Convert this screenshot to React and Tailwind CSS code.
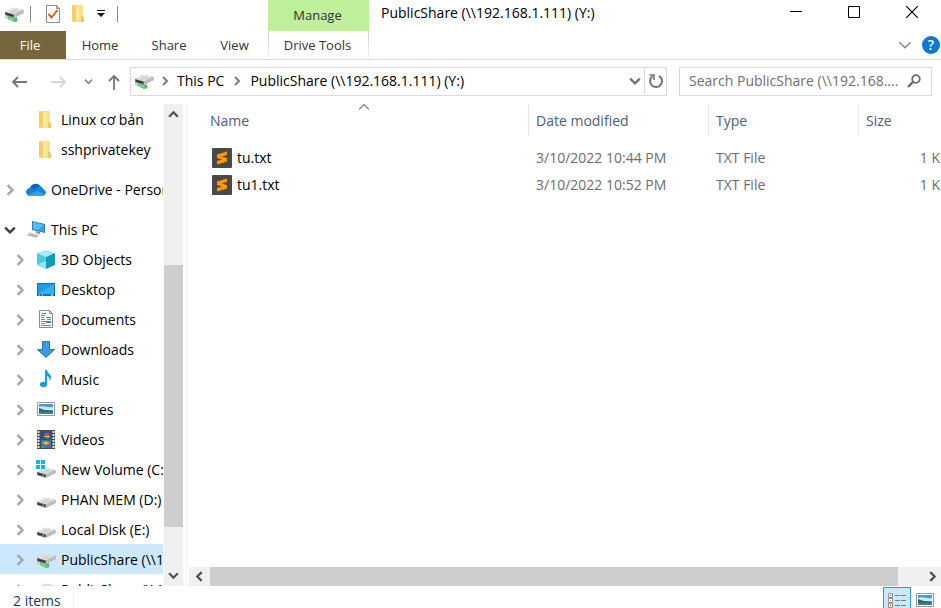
import React from "react";

function Chevron({ dir = "right", className = "", size = 10, width = 2 }) {
  const d = {
    right: "M3 1l4 4-4 4",
    left: "M7 1L3 5l4 4",
    down: "M1 3l4 4 4-4",
    up: "M1 7l4-4 4 4",
  }[dir];
  return (
    <svg width={size} height={size} viewBox="0 0 10 10" fill="none" stroke="currentColor" strokeWidth={width} className={`shrink-0 ${className}`}>
      <path d={d} />
    </svg>
  );
}

function FolderIcon() {
  return (
    <svg width="20" height="20" viewBox="0 0 20 20" className="shrink-0">
      <path d="M3 1h11v12l1 1v4H3z" fill="#ffe08a" />
      <path d="M3 1l4 2v15l-4-2z" fill="#f6cd62" />
      <path d="M7 3h3v12l-3 3z" fill="#ffebae" />
      <path d="M12 12h2l1 2v4h-3z" fill="#f0c85c" />
    </svg>
  );
}

function DriveIcon({ network = false, windows = false }) {
  return (
    <svg width="20" height="20" viewBox="0 0 20 20" className="shrink-0">
      {network && (
        <>
          <path d="M1 12l3-1 10 4v2l-2 1-3-1-8-3z" fill="#c3cfc6" />
          <path d="M4 12l6 2 3-1v4l-3 1-6-3z" fill="#4cc566" />
          <path d="M5 14l5 2" stroke="#9cf0a8" />
        </>
      )}
      <g transform={network ? "translate(0 -4)" : undefined}>
        <path d="M1 12l8-4q1-.5 2 0l8 2q.5 0 .5 1v2l-9 4.500q-1 .5-2 0L1 15z" fill="#9b9b9b" />
        <path d="M1 12l8-4q1-.5 2 0l8 2-9 4.500z" fill="#e6e6e6" />
        <path d="M4 12.200l6-3 6 1.500-6 3z" fill="#d4d4d4" />
        <path d="M1 12l9 2.500v3L1 15z" fill="#6e6e6e" />
        <path d="M2 13l7 2v1.500l-7-2z" fill="#303030" />
        <path d="M10 14.500l9.500-4.500v3l-9.500 4.500z" fill="#bdbdbd" />
        {!network && <path d="M6 15l2 .6" stroke="#5fcf72" />}
      </g>
      {windows && (
        <path d="M0 0h4v4H0zM5 0h4v4H5zM0 5h4v4H0zM5 5h4v4H5z" fill="#12b5f0" />
      )}
    </svg>
  );
}

function OneDriveIcon() {
  return (
    <svg width="20" height="20" viewBox="0 0 20 20" className="shrink-0">
      <path d="M4 8a6 6 0 0 1 11-1l-3 6H1a4 4 0 0 1 3-5z" fill="#0d63b8" />
      <path d="M10 8c2-3 7-2 7 1 4 1 4 7-1 7H4z" fill="#1488d8" />
      <path d="M0 12c0-4 5-5 8-3l9 6-1 1H4c-2 0-4-2-4-4z" fill="#1a82d6" />
      <path d="M2 15l9-4 7 3c-1 2-2 2-3 2H4z" fill="#2fa4ea" />
    </svg>
  );
}

function ComputerIcon() {
  return (
    <svg width="20" height="20" viewBox="0 0 20 20" className="shrink-0">
      <path d="M6 1l13 3v9L6 10z" fill="#2b7db8" />
      <path d="M7 2l11 3v7L7 9z" fill="#2ea6ee" />
      <path d="M7 2l11 3-6 5-5-1z" fill="#55bdf5" />
      <path d="M10 11l4 1v2l-4-1z" fill="#888" />
      <path d="M0 15l4-3 10 3-4 3z" fill="#d3dae0" />
      <path d="M2 15l9 2M4 14l8 2" stroke="#9aa5ad" strokeWidth=".7" />
    </svg>
  );
}

function CubeIcon() {
  return (
    <svg width="20" height="20" viewBox="0 0 20 20" className="shrink-0">
      <path d="M10 0l9 3-9 4-9-4z" fill="#a3ecf3" />
      <path d="M1 3l9 4v12l-9-4z" fill="#45cfe0" />
      <path d="M19 3l-9 4v12l9-4z" fill="#139cb5" />
      <path d="M2 14l8-3v8l-9-4z" fill="#8fe7ef" />
    </svg>
  );
}

function DesktopIcon() {
  return (
    <svg width="20" height="20" viewBox="0 0 20 20" className="shrink-0">
      <path d="M1 3h18v13H1z" fill="#1273bd" />
      <path d="M2 4h16v10H2z" fill="#1c9af2" />
      <path d="M2 14L18 4v10z" fill="#37aefa" />
      <path d="M3 15h1M6 15h1M15 15h2" stroke="#fff" />
    </svg>
  );
}

function DocumentIcon() {
  return (
    <svg width="20" height="20" viewBox="0 0 20 20" className="shrink-0">
      <path d="M3.500.500h10l3 3v14h-13z" fill="#fff" stroke="#8b8b8b" />
      <path d="M13.500.500v3h3" fill="none" stroke="#8b8b8b" />
      <path d="M5 5.500h4M5 7.500h3M5 9.500h4M5 11.500h5M5 13.500h4M5 15.500h10" stroke="#7f878c" />
      <path d="M6 3.500h4M10 7.500h5" stroke="#2b90d9" />
      <path d="M11 9.500h4" stroke="#7f878c" />
      <path d="M10 11h5v2h-5z" fill="#2b90d9" />
    </svg>
  );
}

function DownloadIcon() {
  return (
    <svg width="20" height="20" viewBox="0 0 20 20" className="shrink-0">
      <path d="M6.500 1.500h7v8h5l-8.500 8-8.500-8h5z" fill="#3c97e6" stroke="#2879bd" />
    </svg>
  );
}

function MusicIcon() {
  return (
    <svg width="20" height="20" viewBox="0 0 20 20" className="shrink-0">
      <ellipse cx="7.500" cy="14.500" rx="3.500" ry="2.800" fill="#11a0f0" />
      <path d="M9 0h2c0 3 4 4 4 7 0 2-1 3-2 4 1-3 0-4-2-5v9H9z" fill="#11a0f0" />
    </svg>
  );
}

function PictureIcon() {
  return (
    <svg width="20" height="20" viewBox="0 0 20 20" className="shrink-0">
      <path d="M1.500 2.500h17v13h-17z" fill="#fff" stroke="#959ca1" />
      <path d="M3 4h14v10H3z" fill="#4a9bd8" />
      <path d="M3 7c4-2 8 1 14 0v3H3z" fill="#cfe8f5" />
      <path d="M3 8l6 2 8 1v1H3z" fill="#2d6b62" />
      <path d="M3 12h14v2H3z" fill="#3c7f9c" />
    </svg>
  );
}

function VideoIcon() {
  return (
    <svg width="20" height="20" viewBox="0 0 20 20" className="shrink-0">
      <path d="M1 0h18v19H1z" fill="#4a4a4a" />
      <path d="M2.500 1v17M17.500 1v17" stroke="#e6e6e6" strokeWidth="2" strokeDasharray="2 1" />
      <path d="M5 1h10v8H5z" fill="#2453a8" />
      <path d="M5 10h10v8H5z" fill="#3173cf" />
      <path d="M9 3h4v3H9z" fill="#e14c2c" />
      <path d="M8 6h6v1H8z" fill="#f4c430" />
      <path d="M10 7h3v2h-3z" fill="#48a146" />
      <path d="M6 13l4-2 4 2-4 2z" fill="#f0b429" />
      <path d="M11 14h3v1h-3z" fill="#df492d" />
      <path d="M6 16h3v2H6z" fill="#48a146" />
    </svg>
  );
}

function SublimeIcon() {
  return (
    <svg width="20" height="20" viewBox="0 0 20 20" className="shrink-0">
      <rect width="20" height="20" rx="1" fill="#494949" />
      <path d="M5 6.500L15 3.500V7l-5 1.600 5 1.500v3.400L5 16.500V13l5-1.600L5 9.900z" fill="#ff9800" />
    </svg>
  );
}

function SearchIcon() {
  return (
    <svg width="14" height="14" viewBox="0 0 14 14" fill="none" stroke="#6b6b6b" className="shrink-0">
      <circle cx="9" cy="5" r="3.800" strokeWidth="1.800" />
      <path d="M6.300 7.700L1 13" strokeWidth="2.400" />
    </svg>
  );
}

const quickAccess = ["Linux cơ bản", "sshprivatekey"];

const places = [
  { label: "3D Objects", icon: <CubeIcon /> },
  { label: "Desktop", icon: <DesktopIcon /> },
  { label: "Documents", icon: <DocumentIcon /> },
  { label: "Downloads", icon: <DownloadIcon /> },
  { label: "Music", icon: <MusicIcon /> },
  { label: "Pictures", icon: <PictureIcon /> },
  { label: "Videos", icon: <VideoIcon /> },
  { label: "New Volume (C:)", icon: <DriveIcon windows /> },
  { label: "PHAN MEM (D:)", icon: <DriveIcon /> },
  { label: "Local Disk (E:)", icon: <DriveIcon /> },
  { label: "PublicShare (\\\\192.168.1.111) (Y:)", icon: <DriveIcon network />, selected: true },
  { label: "PublicShare (\\\\192.168.1.111) (Z:)", icon: <DriveIcon network /> },
];

const files = [
  { name: "tu.txt", date: "3/10/2022 10:44 PM", type: "TXT File", size: "1 KB" },
  { name: "tu1.txt", date: "3/10/2022 10:52 PM", type: "TXT File", size: "1 KB" },
];

function TreeItem({ icon, label, level = 0, open, leaf, selected }) {
  return (
    <li>
      <button
        type="button"
        className={`flex h-[30px] w-full items-center whitespace-nowrap pt-0.5 text-left ${level ? "pl-3.5" : "pl-1"} ${selected ? "bg-[#cce8ff]" : ""}`}
      >
        <span className="flex w-[22px] shrink-0">
          {!leaf && <Chevron size={12} dir={open ? "down" : "right"} className={open ? "text-[#404040]" : "text-[#a6a6a6]"} />}
        </span>
        {icon}
        <span className="pl-[5px]">{label}</span>
      </button>
    </li>
  );
}

function TitleBar() {
  return (
    <div className="flex h-[31px] shrink-0">
      <div className="flex w-[268px] shrink-0 items-center pb-1 pl-1">
        <DriveIcon network />
        <span className="ml-1.5 h-4 w-px bg-[#8c8c8c]" />
        <button type="button" aria-label="Properties" className="ml-3">
          <svg width="20" height="20" viewBox="0 0 20 20">
            <path d="M3.500 1.500h10l3 3v14h-13z" fill="#fff" stroke="#8b8b8b" />
            <path d="M13.500 1.500v3h3" fill="none" stroke="#8b8b8b" />
            <path d="M5.500 10l3 3.500 6-7.500" fill="none" stroke="#f0561d" strokeWidth="2" />
          </svg>
        </button>
        <button type="button" aria-label="New folder" className="ml-1.5">
          <FolderIcon />
        </button>
        <button type="button" aria-label="Customize toolbar" className="ml-2">
          <svg width="8" height="8" viewBox="0 0 8 8">
            <path d="M0 0h8v1H0zM0 3h8L4 7z" fill="#111" />
          </svg>
        </button>
        <span className="ml-3 h-4 w-px bg-[#8c8c8c]" />
      </div>
      <div className="flex w-[101px] shrink-0 items-center justify-center bg-[#c0ef9b] pr-0.5 text-[13px] text-[#333]">Manage</div>
      <h1 className="min-w-0 flex-1 truncate pl-3 leading-[26px] text-black">PublicShare (\\192.168.1.111) (Y:)</h1>
      <div className="flex h-6 shrink-0 text-black">
        <button type="button" aria-label="Minimize" className="flex w-[58px] items-center justify-center">
          <svg width="12" height="12" viewBox="0 0 12 12"><path d="M0 5.500h12" stroke="currentColor" /></svg>
        </button>
        <button type="button" aria-label="Maximize" className="flex w-[58px] items-center justify-center">
          <svg width="12" height="12" viewBox="0 0 12 12"><path d="M.500.500h11v11H.500z" fill="none" stroke="currentColor" /></svg>
        </button>
        <button type="button" aria-label="Close" className="flex w-[58px] items-center justify-center">
          <svg width="12" height="12" viewBox="0 0 12 12"><path d="M0 0l12 12M12 0L0 12" stroke="currentColor" strokeWidth="1.200" /></svg>
        </button>
      </div>
    </div>
  );
}

function RibbonTabs() {
  return (
    <div className="flex h-[29px] shrink-0 items-stretch border-b border-[#d9d9d9] text-[13px] text-[#333]">
      <button type="button" className="w-[66px] bg-[#75663c] pr-1.5 text-white">File</button>
      <button type="button" className="w-[68px]">Home</button>
      <button type="button" className="w-[70px]">Share</button>
      <button type="button" className="w-[61px]">View</button>
      <span className="w-[3px]" />
      <div className="w-[101px] bg-linear-to-b from-[#cccccc] to-[#f4f4f4] px-px">
        <button type="button" className="h-full w-full bg-white pr-0.5">Drive Tools</button>
      </div>
      <div className="flex flex-1 items-center justify-end pr-px">
        <button type="button" aria-label="Expand ribbon" className="mr-2.5 flex">
          <Chevron dir="down" size={14} width={1} className="text-[#888]" />
        </button>
        <button type="button" aria-label="Help" className="flex size-[18px] items-center justify-center rounded-full bg-[#0a78d4] text-sm font-semibold leading-none text-white">
          ?
        </button>
      </div>
    </div>
  );
}

function Arrow({ turn, color }) {
  return (
    <svg width="16" height="16" viewBox="0 0 16 16" fill="none" stroke={color} strokeWidth="1.800">
      <path d={turn === "left" ? "M15 8H1M6 3L1 8l5 5" : turn === "right" ? "M1 8h14M10 3l5 5-5 5" : "M8 16V2M3 7l5-5 5 5"} />
    </svg>
  );
}

function AddressRow() {
  return (
    <div className="flex h-11 shrink-0 pb-2 pt-[7px] pr-[9px]">
      <div className="flex w-[130px] shrink-0 items-center pl-3">
        <button type="button" aria-label="Back"><Arrow turn="left" color="#757575" /></button>
        <button type="button" aria-label="Forward" className="ml-[22px]"><Arrow turn="right" color="#d5d5d5" /></button>
        <button type="button" aria-label="Recent locations" className="ml-[18px]">
          <Chevron dir="down" size={9} className="text-[#8a8a8a]" />
        </button>
        <button type="button" aria-label="Up" className="ml-[13px]"><Arrow turn="up" color="#757575" /></button>
      </div>
      <div className="flex min-w-0 flex-1 items-center border border-[#d9d9d9] pb-px text-black">
        <span className="ml-[3px]"><DriveIcon network /></span>
        <Chevron className="ml-1.5 text-[#7a7a7a]" size={10} />
        <button type="button" className="ml-[7px] whitespace-nowrap">This PC</button>
        <Chevron className="ml-2 text-[#7a7a7a]" size={10} />
        <button type="button" className="ml-2 truncate">PublicShare (\\192.168.1.111) (Y:)</button>
        <button type="button" aria-label="Previous locations" className="ml-auto mr-[3px]">
          <Chevron dir="down" size={12} className="text-[#757575]" />
        </button>
        <button type="button" aria-label="Refresh" className="flex h-full w-[22px] items-center justify-center border-l border-[#d9d9d9]">
          <svg width="16" height="16" viewBox="0 0 16 16" fill="none" stroke="#757575" strokeWidth="2">
            <path d="M11 2.800a6 6 0 1 1-6.500.4" />
            <path d="M1.500 2h4.500v5" strokeWidth="1.600" />
          </svg>
        </button>
      </div>
      <label className="ml-3 flex w-[253px] shrink-0 items-center border border-[#d9d9d9] pl-[9px] pr-2.5 pb-px">
        <input
          type="text"
          aria-label="Search"
          placeholder="Search PublicShare (\\192.168...."
          className="min-w-0 flex-1 bg-transparent outline-none placeholder:text-[#6f6f6f]"
        />
        <SearchIcon />
      </label>
    </div>
  );
}

function Sidebar() {
  return (
    <div className="flex w-[187px] shrink-0 border-r border-[#f3f3f3]">
      <nav className="min-w-0 flex-1 overflow-hidden text-black">
        <ul>
          {quickAccess.map((label) => (
            <TreeItem key={label} label={label} icon={<FolderIcon />} level={1} leaf />
          ))}
        </ul>
        <ul className="mt-2.5">
          <TreeItem label="OneDrive - Personal" icon={<OneDriveIcon />} />
        </ul>
        <ul className="mt-2.5">
          <TreeItem label="This PC" icon={<ComputerIcon />} open />
          {places.map((p) => (
            <TreeItem key={p.label} {...p} level={1} />
          ))}
        </ul>
      </nav>
      <div className="ml-px mr-[3px] flex w-[19px] shrink-0 flex-col bg-[#f0f0f0] text-[#505050]">
        <button type="button" aria-label="Scroll up" className="flex h-[21px] items-center justify-center">
          <Chevron dir="up" size={11} />
        </button>
        <div className="flex flex-1 flex-col">
          <div className="grow-[140]" />
          <div className="grow-[262] bg-[#cdcdcd]" />
          <div className="grow-[38]" />
        </div>
        <button type="button" aria-label="Scroll down" className="flex h-[21px] items-center justify-center">
          <Chevron dir="down" size={11} />
        </button>
      </div>
    </div>
  );
}

function FileList() {
  return (
    <main className="flex min-w-0 flex-1 flex-col">
      <div className="min-h-0 flex-1 overflow-hidden">
        <table className="w-[771px] table-fixed border-separate border-spacing-0 text-left text-[#6d6d6d]">
          <thead className="text-[#4c607a]">
            <tr className="h-8">
              <th className="relative w-[342px] border-r border-[#e5e5e5] pl-[23px] pt-0.5 font-normal">
                Name
                <Chevron dir="up" size={12} width={1} className="absolute left-1/2 top-[-3px] text-[#777]" />
              </th>
              <th className="w-[180px] border-r border-[#e5e5e5] pl-[7px] pt-0.5 font-normal">Date modified</th>
              <th className="w-[150px] border-r border-[#e5e5e5] pl-[7px] pt-0.5 font-normal">Type</th>
              <th className="pl-[7px] pt-0.5 font-normal">Size</th>
            </tr>
          </thead>
          <tbody className="before:block before:h-2">
            {files.map((f) => (
              <tr key={f.name} className="h-[27px]">
                <td className="pl-[25px] text-black">
                  <span className="flex items-center gap-[5px]">
                    <SublimeIcon />
                    {f.name}
                  </span>
                </td>
                <td className="pl-[7px]">{f.date}</td>
                <td className="pl-[7px]">{f.type}</td>
                <td className="pr-[9px] text-right">{f.size}</td>
              </tr>
            ))}
          </tbody>
        </table>
      </div>
      <div className="ml-0.5 flex h-[19px] shrink-0 bg-[#f0f0f0] text-[#505050]">
        <button type="button" aria-label="Scroll left" className="flex w-[21px] items-center justify-center">
          <Chevron dir="left" size={11} />
        </button>
        <div className="flex flex-1">
          <div className="grow-[688] bg-[#cdcdcd]" />
          <div className="grow-[26]" />
        </div>
        <button type="button" aria-label="Scroll right" className="flex w-[17px] items-center justify-center">
          <Chevron size={11} />
        </button>
      </div>
    </main>
  );
}

function StatusBar() {
  return (
    <footer className="flex h-[22px] shrink-0 overflow-hidden">
      <p className="pl-[13px] leading-[30px] text-[#1e395b]">2 items</p>
      <span className="ml-3 w-px bg-[#f3f3f3]" />
      <div className="ml-auto flex h-[30px] pt-px">
        <button type="button" aria-label="Details view" className="flex h-7 w-7 items-center justify-center border border-[#26a0da] bg-[#cce8f6]">
          <svg width="20" height="18" viewBox="0 0 20 18">
            <g fill="#fff" stroke="#8e8e8e">
              <path d="M1.500 1.500h4v4h-4zM1.500 6.500h4v4h-4zM1.500 11.500h4v4h-4z" />
            </g>
            <path d="M3 3h1v1H3z" fill="#2b6fb5" />
            <path d="M3 8h1v1H3z" fill="#d09a1c" />
            <path d="M3 13h1v1H3z" fill="#c33" />
            <path d="M8 3.500h5M14 3.500h5M8 8.500h5M14 8.500h5M8 13.500h5M14 13.500h5" stroke="#6f7f88" />
          </svg>
        </button>
        <button type="button" aria-label="Large icons view" className="flex h-7 w-[30px] items-center justify-center pr-0.5">
          <PictureIcon />
        </button>
      </div>
    </footer>
  );
}

export default function App() {
  return (
    <div className="flex h-screen flex-col overflow-hidden bg-white font-['Open_Sans','Noto_Sans',sans-serif] text-sm">
      <TitleBar />
      <RibbonTabs />
      <AddressRow />
      <div className="flex min-h-0 flex-1">
        <Sidebar />
        <FileList />
      </div>
      <StatusBar />
    </div>
  );
}
